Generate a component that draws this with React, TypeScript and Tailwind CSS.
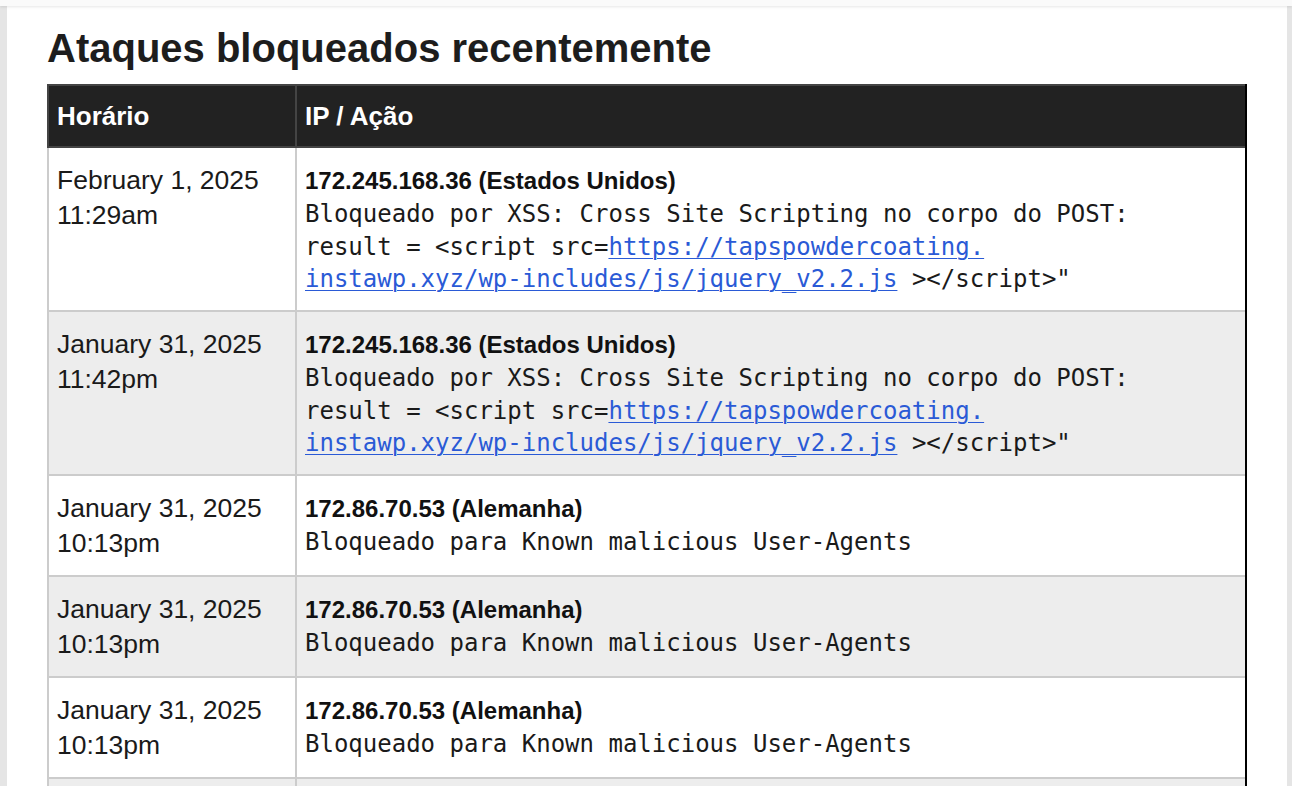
import React from "react";

type Row = {
  date: string;
  time: string;
  ip: string;
  kind: "xss" | "ua";
};

const rows: Row[] = [
  { date: "February 1, 2025", time: "11:29am", ip: "172.245.168.36 (Estados Unidos)", kind: "xss" },
  { date: "January 31, 2025", time: "11:42pm", ip: "172.245.168.36 (Estados Unidos)", kind: "xss" },
  { date: "January 31, 2025", time: "10:13pm", ip: "172.86.70.53 (Alemanha)", kind: "ua" },
  { date: "January 31, 2025", time: "10:13pm", ip: "172.86.70.53 (Alemanha)", kind: "ua" },
  { date: "January 31, 2025", time: "10:13pm", ip: "172.86.70.53 (Alemanha)", kind: "ua" },
  { date: "January 31, 2025", time: "10:13pm", ip: "172.86.70.53 (Alemanha)", kind: "ua" },
];

const sans = "font-['Liberation_Sans',Arial,sans-serif]";
const mono = "font-['DejaVu_Sans_Mono','Liberation_Mono',monospace]";

function Action({ kind }: { kind: Row["kind"] }) {
  if (kind === "ua") {
    return (
      <div className={`${mono} text-[24px] leading-[32.5px] text-[#1a1a1a]`}>
        Bloqueado para Known malicious User-Agents
      </div>
    );
  }
  return (
    <div className={`${mono} text-[24px] leading-[32.5px] text-[#1a1a1a]`}>
      <div>Bloqueado por XSS: Cross Site Scripting no corpo do POST:</div>
      <div>
        result = &lt;script src=
        <a href="#" className="text-[#2a5ad6] underline decoration-1 underline-offset-[3px]">
          https://tapspowdercoating.
        </a>
      </div>
      <div>
        <a href="#" className="text-[#2a5ad6] underline decoration-1 underline-offset-[3px]">
          instawp.xyz/wp-includes/js/jquery_v2.2.js
        </a>{" "}
        &gt;&lt;/script&gt;"
      </div>
    </div>
  );
}

export default function App() {
  return (
    <div className={`min-h-screen bg-[#e5e5e5] ${sans}`}>
      <div className="relative z-10 h-[6px] bg-[#fafafa] shadow-[0_1px_3px_rgba(0,0,0,0.10)]" />
      <div className="ml-[7px] mr-[5px] bg-white pl-[40px] pr-[40px] pt-[18px] pb-[40px]">
        <h2 className="mb-[12px] text-[40px] font-bold leading-[48px] text-[#1d1d1d]">
          Ataques bloqueados recentemente
        </h2>
        <div className="w-[1200px] border-r-2 border-black">
          <div className="flex h-[64px] border-y-2 border-l-2 border-[#444] bg-[#222] text-white">
            <div className="flex w-[248px] shrink-0 items-center border-r-2 border-[#444] px-[8px] text-[26px] font-bold leading-[35px]">
              Horário
            </div>
            <div className="flex flex-1 items-center px-[8px] text-[26px] font-bold leading-[35px]">
              IP / Ação
            </div>
          </div>
          {rows.map((r, i) => (
            <div
              key={i}
              className={`flex border-b-2 border-l-2 border-[#ccc] ${i % 2 === 1 ? "bg-[#ededed]" : "bg-white"}`}
            >
              <div className="w-[248px] shrink-0 border-r-2 border-[#ccc] px-[8px] pt-[15px] pb-[14px] text-[26.5px] leading-[35px] text-[#1a1a1a]">
                <div>{r.date}</div>
                <div>{r.time}</div>
              </div>
              <div className="flex-1 px-[8px] pt-[15px] pb-[14.5px]">
                <div className="text-[24px] font-bold leading-[35px] text-[#111]">{r.ip}</div>
                <Action kind={r.kind} />
              </div>
            </div>
          ))}
        </div>
      </div>
    </div>
  );
}
